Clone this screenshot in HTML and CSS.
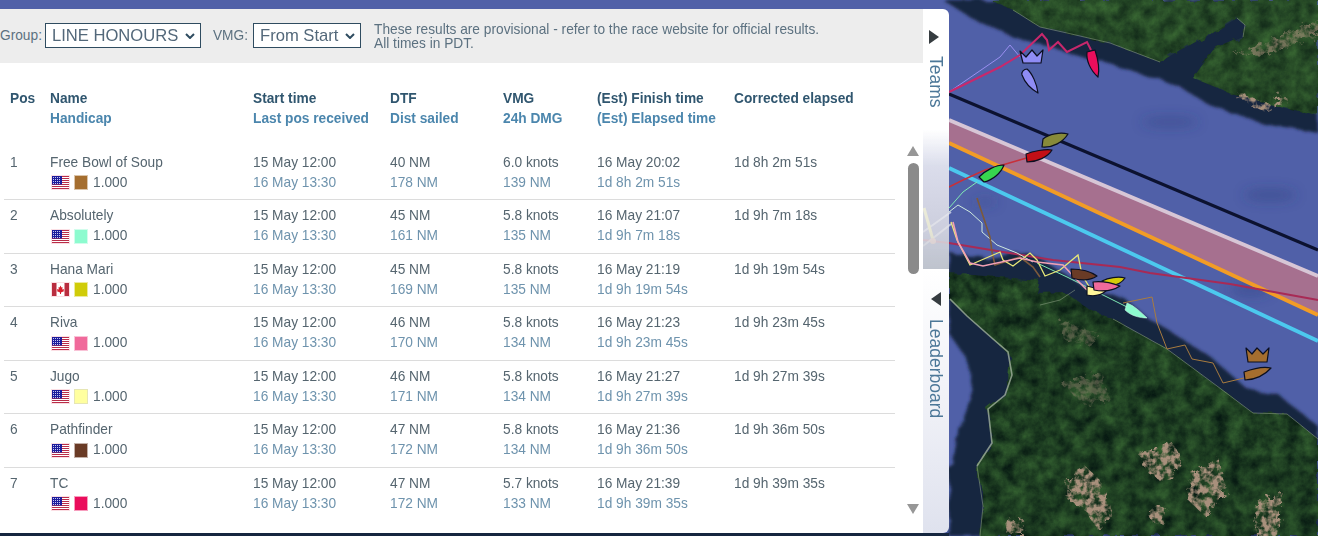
FILE: index.html
```html
<!DOCTYPE html>
<html lang="en">
<head>
<meta charset="utf-8">
<title>Leaderboard</title>
<link rel="stylesheet" href="styles.css">
</head>
<body>
<svg class="map" viewBox="0 0 1318 536" xmlns="http://www.w3.org/2000/svg" aria-hidden="true">
  <defs>
    <filter id="forest" x="0" y="0" width="100%" height="100%" color-interpolation-filters="sRGB">
      <feTurbulence type="fractalNoise" baseFrequency="0.08" numOctaves="3" seed="7" result="edge"/>
      <feDisplacementMap in="SourceAlpha" in2="edge" scale="8" result="mask"/>
      <feTurbulence type="fractalNoise" baseFrequency="0.07" numOctaves="6" seed="4"/>
      <feColorMatrix values="0.24 0 0 0 -0.005  0.38 0 0 0 0.05  0.16 0 0 0 0.05  0 0 0 0 1"/>
      <feComposite in2="mask" operator="in"/>
    </filter>
    <filter id="coast" x="-5%" y="-5%" width="110%" height="110%">
      <feTurbulence type="fractalNoise" baseFrequency="0.06" numOctaves="3" seed="3" result="edge"/>
      <feDisplacementMap in="SourceGraphic" in2="edge" scale="8"/>
      <feGaussianBlur stdDeviation="1.5"/>
    </filter>
    <filter id="mottle" x="-10%" y="-10%" width="120%" height="120%" color-interpolation-filters="sRGB">
      <feTurbulence type="fractalNoise" baseFrequency="0.16" numOctaves="3" seed="12" result="n"/>
      <feDisplacementMap in="SourceGraphic" in2="n" scale="12" result="d"/>
      <feColorMatrix in="n" values="0 0 0 0 0  0 0 0 0 0  0 0 0 0 0  3.4 0 0 0 -1.15" result="a"/>
      <feComposite in="d" in2="a" operator="in"/>
      <feGaussianBlur stdDeviation="0.7"/>
    </filter>
    <filter id="soft"><feGaussianBlur stdDeviation="0.6"/></filter>
    <filter id="blur6"><feGaussianBlur stdDeviation="6"/></filter>
  </defs>
  <rect class="water" width="1318" height="536"/>
  <g class="ripples" filter="url(#blur6)">
    <ellipse cx="1170" cy="122" rx="28" ry="5"/>
    <ellipse cx="1270" cy="195" rx="26" ry="6"/>
    <ellipse cx="985" cy="202" rx="12" ry="3"/>
    <ellipse cx="1250" cy="290" rx="20" ry="6"/>
  </g>
  <g filter="url(#coast)">
    <path class="shallow" d="M943 0L970 17L1013 37L1060 50L1113 65L1180 87L1213 107L1263 123L1318 133V0Z"/>
    <path class="shallow" d="M949 252L987 257L1027 252L1047 263L1070 277L1093 293L1123 297L1150 320L1167 329L1213 359L1247 389L1280 396L1318 426V536H949V469L957 436L973 393L967 359L949 333Z"/>
  </g>
  <path class="shallow" d="M0 533H949V536H0Z"/>
  <g filter="url(#forest)">
    <path class="land" d="M990 0L1013 10L1040 27L1067 33L1110 43L1160 62L1180 50L1213 33L1237 18L1245 25L1243 37L1213 50L1193 78L1230 93L1280 107L1318 115V0Z"/>
    <path class="land" d="M949 273L985 276L1040 280L1037 293L1065 292L1090 310L1113 319L1167 349L1213 383L1253 413L1287 414L1318 439V536H980L983 506L977 466L993 443L987 409L1007 393L1010 356L993 339L967 316L949 299Z"/>
  </g>
  <path class="land-glow" d="M990 0L1013 10L1040 27L1067 33L1110 43L1160 62L1180 50L1213 33L1237 18L1245 25L1243 37L1213 50L1193 78L1230 93L1280 107L1318 115V0Z"/>
  <path class="surf" filter="url(#soft)" d="M950 299L967 316L993 339L1008 352L1012 375L1005 395L988 409L992 443L977 466"/>
  <path class="surf-sm" filter="url(#soft)" d="M1013 10L1040 27L1067 33L1110 43L1160 62M1113 319L1167 349L1213 383L1253 413L1287 414L1318 439"/>
  <path class="surf-sm" filter="url(#soft)" d="M1040 305L1060 300L1075 290M1237 18L1245 25L1243 37M977 466L983 506L980 536"/>
  <g class="clearcut" filter="url(#mottle)">
    <path d="M1066 480L1085 466L1100 480L1113 512L1098 530L1085 510L1068 500Z"/>
    <path d="M1140 455L1172 442L1182 460L1165 482L1146 472Z"/>
    <path d="M1190 475L1218 458L1226 490L1205 516L1188 500Z"/>
    <path d="M1255 505L1282 492L1278 536H1256Z"/>
    <path d="M1150 505L1166 508L1162 524L1150 520Z"/>
    <path d="M1005 522L1022 518L1024 536H1008Z"/>
    <path d="M1235 97L1240 92L1270 105L1280 95L1290 100L1265 112Z"/>
    <path d="M1235 55L1270 40L1318 20V35L1270 55Z" opacity=".6"/>
    <path d="M1062 385L1100 372L1110 400L1085 405Z" opacity=".4"/>
    <path d="M1060 320L1100 335L1090 345L1065 340Z" opacity=".4"/>
  </g>
  <polygon class="band" points="949,120 1318,276 1318,315 949,143"/>
  <path class="lane lane-black" d="M949 94L1318 250"/>
  <path class="lane lane-white" d="M949 120L1318 276"/>
  <path class="lane lane-orange" d="M949 143L1318 315"/>
  <path class="lane lane-cyan" d="M949 168L1318 341"/>
  <g class="tracks">
    <path class="t-violet" d="M949 92L1000 57L1010 45L1020 57"/>
    <path class="t-crim" d="M949 92L1000 67L1020 55L1042 34L1047 40L1049 50L1058 42L1067 52L1087 42L1091 50"/>
    <path class="t-red" d="M949 187L963 180L985 170L1030 157"/>
    <path class="t-crim-thin" d="M923 240L949 243L1003 252L1053 260L1120 267L1150 273L1230 284L1318 300"/>
    <path class="t-mint" d="M949 208L963 192L977 182M1037 263L1067 277L1127 307"/>
    <path class="t-paleblue" d="M949 212L958 205L970 212L982 223L982 232L997 245L1017 253L1033 262"/>
    <path class="t-brown" d="M977 198L990 237L992 252L995 265L1020 257L1033 267L1040 277"/>
    <path class="t-yellow" d="M951 222L957 240L970 265L1000 252L1003 260L1013 266L1030 253L1037 260L1045 276L1060 270L1078 255L1082 275L1090 288"/>
    <path class="t-pink" d="M953 222L958 242L970 263L983 266L1020 258L1037 262L1063 265L1077 280L1087 290"/>
    <path class="t-white" d="M923 232L951 212M923 246L951 224"/>
    <path class="t-thick" d="M924 208L933 240"/>
    <path class="t-gold" d="M1123 303L1152 297L1157 323L1167 349L1185 345L1192 359L1213 363L1223 383L1244 378"/>
    <circle class="t-dot" cx="933" cy="241" r="3"/>
  </g>
  <g class="boats">
    <path fill="#8f8cf5" d="M1038 93C1037 84 1032 73 1027 69C1024 69 1021 72 1022 75C1025 83 1031 89 1038 93Z"/>
    <path fill="#ea0e5c" d="M1098 77C1100 68 1097 56 1095 50L1087 52C1086 60 1090 70 1098 77Z"/>
    <path fill="#878a3a" d="M1068 134C1060 132 1049 134 1043 139L1042 147C1053 148 1063 142 1068 134Z"/>
    <path fill="#c30f16" d="M1052 150C1045 149 1033 151 1026 154L1027 162C1037 162 1048 157 1052 150Z"/>
    <path fill="#37d64f" d="M1004 165C996 165 986 170 979 177L984 182C993 180 1001 173 1004 165Z"/>
    <path fill="#6a3b26" d="M1097 276C1090 271 1080 269 1071 269L1072 278C1082 281 1091 280 1097 276Z"/>
    <path fill="#d4cc09" d="M1125 278C1118 276 1108 278 1102 281L1106 284C1114 286 1121 284 1125 278Z"/>
    <path fill="#fff79a" d="M1106 291L1087 286L1087 295C1095 297 1101 295 1106 291Z"/>
    <path fill="#f06a9b" d="M1120 286C1112 283 1102 281 1093 282L1094 290C1104 292 1114 290 1120 286Z"/>
    <path class="noline" fill="#8dfbcf" d="M1147 318C1141 312 1133 305 1127 303L1125 310C1131 316 1140 318 1147 318Z"/>
    <path fill="#a56e2f" d="M1271 368C1263 366 1252 369 1244 372L1245 380C1255 380 1265 375 1271 368Z"/>
    <path fill="#8f8cf5" d="M1020 51L1026 57L1032 50L1037 56L1043 50L1041 63L1023 63Z"/>
    <path fill="#a56e2f" d="M1246 348L1252 354L1257 348L1263 354L1269 348L1267 362L1248 362Z"/>
  </g>
</svg>

<section class="panel">
  <div class="main">
    <header class="toolbar">
      <label class="field"><span>Group:</span>
        <select class="select select-group"><option>LINE HONOURS</option></select>
      </label>
      <label class="field field-vmg"><span>VMG:</span>
        <select class="select select-vmg"><option>From Start</option></select>
      </label>
      <p class="note">These results are provisional - refer to the race website for official results.<br>All times in PDT.</p>
    </header>
    <div class="content">
      <div class="table">
        <div class="row head">
          <div><b>Pos</b></div>
          <div><b>Name</b><b class="sub">Handicap</b></div>
          <div><b>Start time</b><b class="sub">Last pos received</b></div>
          <div><b>DTF</b><b class="sub">Dist sailed</b></div>
          <div><b>VMG</b><b class="sub">24h DMG</b></div>
          <div><b>(Est) Finish time</b><b class="sub">(Est) Elapsed time</b></div>
          <div><b>Corrected elapsed</b></div>
        </div>

        <div class="row entry">
          <div>1</div>
          <div>Free Bowl of Soup<span class="boat"><svg class="flag"><use href="#us"/></svg><i class="swatch swatch-1"></i>1.000</span></div>
          <div>15 May 12:00<span class="sub">16 May 13:30</span></div>
          <div>40 NM<span class="sub">178 NM</span></div>
          <div>6.0 knots<span class="sub">139 NM</span></div>
          <div>16 May 20:02<span class="sub">1d 8h 2m 51s</span></div>
          <div>1d 8h 2m 51s</div>
        </div>
        <div class="row entry">
          <div>2</div>
          <div>Absolutely<span class="boat"><svg class="flag"><use href="#us"/></svg><i class="swatch swatch-2"></i>1.000</span></div>
          <div>15 May 12:00<span class="sub">16 May 13:30</span></div>
          <div>45 NM<span class="sub">161 NM</span></div>
          <div>5.8 knots<span class="sub">135 NM</span></div>
          <div>16 May 21:07<span class="sub">1d 9h 7m 18s</span></div>
          <div>1d 9h 7m 18s</div>
        </div>
        <div class="row entry">
          <div>3</div>
          <div>Hana Mari<span class="boat"><svg class="flag"><use href="#ca"/></svg><i class="swatch swatch-3"></i>1.000</span></div>
          <div>15 May 12:00<span class="sub">16 May 13:30</span></div>
          <div>45 NM<span class="sub">169 NM</span></div>
          <div>5.8 knots<span class="sub">135 NM</span></div>
          <div>16 May 21:19<span class="sub">1d 9h 19m 54s</span></div>
          <div>1d 9h 19m 54s</div>
        </div>
        <div class="row entry">
          <div>4</div>
          <div>Riva<span class="boat"><svg class="flag"><use href="#us"/></svg><i class="swatch swatch-4"></i>1.000</span></div>
          <div>15 May 12:00<span class="sub">16 May 13:30</span></div>
          <div>46 NM<span class="sub">170 NM</span></div>
          <div>5.8 knots<span class="sub">134 NM</span></div>
          <div>16 May 21:23<span class="sub">1d 9h 23m 45s</span></div>
          <div>1d 9h 23m 45s</div>
        </div>
        <div class="row entry">
          <div>5</div>
          <div>Jugo<span class="boat"><svg class="flag"><use href="#us"/></svg><i class="swatch swatch-5"></i>1.000</span></div>
          <div>15 May 12:00<span class="sub">16 May 13:30</span></div>
          <div>46 NM<span class="sub">171 NM</span></div>
          <div>5.8 knots<span class="sub">134 NM</span></div>
          <div>16 May 21:27<span class="sub">1d 9h 27m 39s</span></div>
          <div>1d 9h 27m 39s</div>
        </div>
        <div class="row entry">
          <div>6</div>
          <div>Pathfinder<span class="boat"><svg class="flag"><use href="#us"/></svg><i class="swatch swatch-6"></i>1.000</span></div>
          <div>15 May 12:00<span class="sub">16 May 13:30</span></div>
          <div>47 NM<span class="sub">172 NM</span></div>
          <div>5.8 knots<span class="sub">134 NM</span></div>
          <div>16 May 21:36<span class="sub">1d 9h 36m 50s</span></div>
          <div>1d 9h 36m 50s</div>
        </div>
        <div class="row entry last">
          <div>7</div>
          <div>TC<span class="boat"><svg class="flag"><use href="#us"/></svg><i class="swatch swatch-7"></i>1.000</span></div>
          <div>15 May 12:00<span class="sub">16 May 13:30</span></div>
          <div>47 NM<span class="sub">172 NM</span></div>
          <div>5.7 knots<span class="sub">133 NM</span></div>
          <div>16 May 21:39<span class="sub">1d 9h 39m 35s</span></div>
          <div>1d 9h 39m 35s</div>
        </div>
      </div>
      <div class="scrollbar">
        <i class="arrow arrow-up"></i>
        <i class="thumb"></i>
        <i class="arrow arrow-down"></i>
      </div>
    </div>
  </div>
  <aside class="tabs">
    <div class="tab tab-teams"><i class="tri tri-right"></i><span class="tab-label">Teams</span></div>
    <div class="tab tab-board"><i class="tri tri-left"></i><span class="tab-label">Leaderboard</span></div>
  </aside>
</section>

<svg class="defs" xmlns="http://www.w3.org/2000/svg" aria-hidden="true">
  <symbol id="us" viewBox="0 0 19 15">
    <rect width="19" height="15" fill="#fbdfe4"/>
    <rect x="1" y="1" width="17" height="13" fill="#fff"/>
    <path d="M1 1.5h17M1 3.5h17M1 5.5h17M1 7.5h17M1 9.5h17M1 11.5h17M1 13.5h17" stroke="#b92d48" stroke-width="1"/>
    <rect x="1" y="1" width="10" height="8.5" fill="#1c1c9c"/>
    <path d="M2 2.5h8M2 4.5h8M2 6.5h8M2 8.5h8" stroke="#c8c8f0" stroke-width="1" stroke-dasharray="1 1"/>
  </symbol>
  <symbol id="ca" viewBox="0 0 19 15">
    <rect width="19" height="15" fill="#fbdfe4"/>
    <rect x="1" y="1" width="17" height="13" fill="#fff"/>
    <rect x="1" y="1" width="4.5" height="13" fill="#b92d3f"/>
    <rect x="13.5" y="1" width="4.5" height="13" fill="#b92d3f"/>
    <path d="M9.5 3.5L10.4 5.5L11.5 5L11.2 7.5L13 7L12.5 8.5L13.4 9L10 10.5V12H9V10.5L5.6 9L6.5 8.5L6 7L7.8 7.5L7.5 5L8.6 5.5Z" fill="#d81e2c"/>
  </symbol>
</svg>
</body>
</html>
```

FILE: styles.css
```css
* { box-sizing: border-box; }
html, body { margin: 0; height: 100%; }
body {
  position: relative;
  width: 1318px;
  height: 536px;
  overflow: hidden;
  font-family: "Liberation Sans", Arial, sans-serif;
  font-size: 13.72px;
  color: #55656f;
  background: #4f5fa6;
}
.defs { position: absolute; width: 0; height: 0; }

/* map canvas */
.map { position: absolute; left: 0; top: 0; width: 1318px; height: 536px; display: block; }
.water { fill: #5060a8; }
.ripples ellipse { fill: #2f3f80; opacity: .45; }
.shallow { fill: #15263f; }
.land { fill: #000; }
.land-glow { fill: #5f9a4e; opacity: .12; }
.surf { fill: none; stroke: #a9b8a4; stroke-width: 1.6; opacity: .75; }
.surf-sm { fill: none; stroke: #9aab90; stroke-width: 1; opacity: .5; }
.clearcut path { fill: #a8907c; }
.band { fill: #a6708f; }
.lane { fill: none; }
.lane-black { stroke: #0c1230; stroke-width: 3; }
.lane-white { stroke: #d7c6d6; stroke-width: 4; }
.lane-orange { stroke: #f29c26; stroke-width: 4; }
.lane-cyan { stroke: #4cc9ee; stroke-width: 4; }
.tracks path { fill: none; stroke-width: 1; }
.tracks .t-crim { stroke: #c8286c; stroke-width: 2; }
.tracks .t-red { stroke: #c8303a; stroke-width: 1.4; }
.tracks .t-crim-thin { stroke: #a82a55; stroke-width: 1.8; }
.tracks .t-brown { stroke: #7c5a3c; stroke-width: 1.6; }
.tracks .t-yellow { stroke: #e8e878; stroke-width: 1.3; }
.tracks .t-pink { stroke: #f2a0b4; stroke-width: 1.6; }
.tracks .t-thick { stroke: #f2ef70; stroke-width: 3; }
.tracks .t-white { stroke: #ffffff; stroke-width: 2; opacity: .6; }
.t-violet { stroke: #9a8ff0; }
.t-mint { stroke: #7fe8b4; }
.t-paleblue { stroke: #cfeadf; }
.t-gold { stroke: #a97c3f; }
.t-dot { fill: #f0a08a; }
.boats path { stroke: #0b0f20; stroke-width: 1.2; stroke-linejoin: round; }
.boats .noline { stroke: #d8fff0; stroke-width: .5; }

/* panel */
.panel {
  position: absolute;
  left: 0;
  top: 9px;
  width: 949px;
  height: 524px;
  display: flex;
  border-radius: 0 6px 6px 0;
  overflow: hidden;
}
.main {
  width: 923px;
  display: flex;
  flex-direction: column;
  background: #fff;
}
.toolbar {
  height: 54px;
  flex: none;
  display: flex;
  align-items: flex-start;
  padding-top: 14px;
  background: #ededed;
  color: #5c7180;
}
.field { display: flex; align-items: center; gap: 3px; height: 25px; }
.field-vmg { margin-left: 12px; gap: 5px; }
.select {
  appearance: none;
  -webkit-appearance: none;
  height: 25px;
  padding: 0 0 0 6px;
  border: 1px solid #2f4c60;
  border-radius: 0;
  color: #53687a;
  font-family: "Liberation Sans", Arial, sans-serif;
  font-size: 16.6px;
  background: #fff url("data:image/svg+xml,%3Csvg xmlns='http://www.w3.org/2000/svg' width='10' height='6'%3E%3Cpath d='M1 1l4 4 4-4' fill='none' stroke='%232f4c60' stroke-width='2'/%3E%3C/svg%3E") no-repeat;
}
.select-group { width: 156px; background-position: 139px 9px; }
.select-vmg { width: 108px; background-position: 91px 9px; }
.note { margin: 0 0 0 13px; line-height: 14px; color: #5c7180; }

.content { flex: 1; display: flex; min-height: 0; }
.table { width: 891px; margin-left: 4px; padding-top: 26px; }
.row {
  display: grid;
  grid-template-columns: 40px 203px 137px 113px 94px 137px 1fr;
  padding-left: 6px;
  line-height: 20px;
}
.row > div { white-space: nowrap; }
.head { height: 57.9px; color: #30566f; }
.head b { display: block; }
.head .sub { color: #4b86ad; }
.entry {
  height: 53.5px;
  padding-top: 6px;
  border-bottom: 1px solid #dcdcdc;
}
.entry.last { border-bottom: 0; }
.entry .sub { display: block; color: #6e93ad; }
.boat { display: flex; align-items: center; height: 20px; padding-left: 1px; }
.flag { width: 19px; height: 15px; margin-right: 4px; }
.swatch { width: 14px; height: 15px; margin-right: 5px; border: 1px solid rgba(255,255,255,.6); }
.swatch-1 { background: #a56e2f; }
.swatch-2 { background: #8dfbcf; }
.swatch-3 { background: #d0cc09; }
.swatch-4 { background: #f06a9b; }
.swatch-5 { background: #ffff9f; border-color: #e6e6b4; }
.swatch-6 { background: #6a3b26; }
.swatch-7 { background: #ea0e5c; }

.scrollbar {
  width: 28px;
  display: flex;
  flex-direction: column;
  align-items: center;
  padding: 83px 0 19px 8px;
}
.thumb { width: 11px; height: 111px; margin-top: 7px; border-radius: 6px; background: #8a8a8a; }
.arrow { width: 0; height: 0; border-left: 6px solid transparent; border-right: 6px solid transparent; }
.arrow-up { border-bottom: 10px solid #979797; }
.arrow-down { margin-top: auto; border-top: 10px solid #979797; }

.tabs {
  width: 26px;
  display: flex;
  flex-direction: column;
  background: linear-gradient(#fff 0, #fff 23%, rgba(245,245,248,.84) 30%, rgba(228,228,232,.84) 42%, rgba(200,204,208,.92) 49.6%, #fff 49.7%, #f0f1f7 75%, #dfe2ee 100%);
}
.tab { display: flex; flex-direction: column; align-items: center; }
.tab-teams { height: 262px; padding-top: 21px; }
.tab-board { padding-top: 21px; }
.tab-label {
  writing-mode: vertical-rl;
  font-size: 17.5px;
  line-height: 20px;
  color: #4c7798;
  margin-left: -1px;
}
.tab-teams .tab-label { margin-top: 12px; }
.tab-board .tab-label { margin-top: 13px; }
.tri { width: 0; height: 0; border-top: 7.5px solid transparent; border-bottom: 7.5px solid transparent; margin-left: -5px; }
.tri-right { border-left: 10px solid #363c40; }
.tri-left { border-right: 10px solid #363c40; margin-left: -1px; }
```
